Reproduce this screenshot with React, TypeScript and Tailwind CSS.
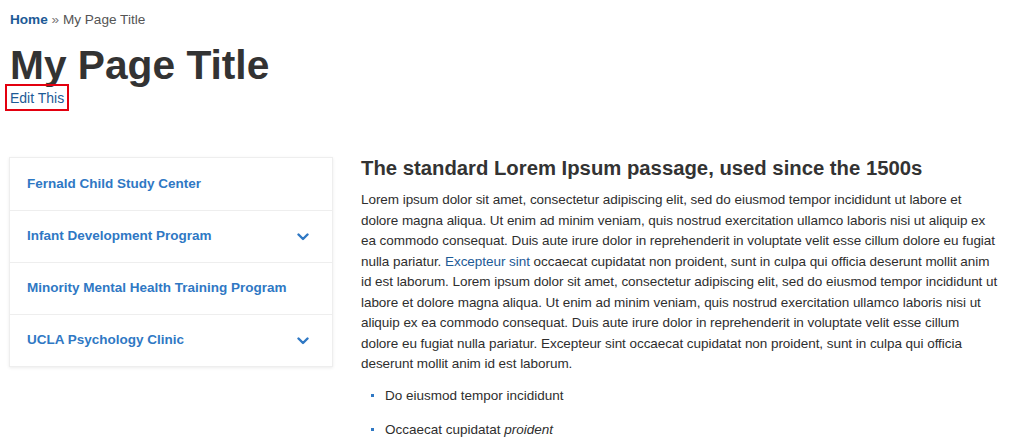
import React from "react";

const sideLinks = [
  { label: "Fernald Child Study Center", sub: false },
  { label: "Infant Development Program", sub: true },
  { label: "Minority Mental Health Training Program", sub: false },
  { label: "UCLA Psychology Clinic", sub: true },
];

const Chevron: React.FC = () => (
  <svg width="12" height="8" viewBox="0 0 12 8" fill="none" className="shrink-0">
    <path d="M1.5 1.5 6 6l4.5-4.5" stroke="#2f78c4" strokeWidth="2.4" strokeLinecap="round" strokeLinejoin="round" />
  </svg>
);

const App: React.FC = () => {
  return (
    <div className="min-h-[442px] bg-white px-[10px] pt-[11px] text-[#333] font-['Liberation_Sans',Arial,sans-serif]">
      {/* Breadcrumb */}
      <nav className="text-[13.6px] leading-[18px] text-[#555]">
        <a href="#" className="font-bold text-[#1d5a96]">Home</a>
        <span className="text-[#777]"> » </span>
        <span>My Page Title</span>
      </nav>

      {/* Title */}
      <h1 className="mt-[14px] text-[40.7px] font-bold leading-[44px] text-[#333]">My Page Title</h1>
      <div className="-ml-[5px] mt-[-3px]">
        <a href="#" className="inline-block border-2 border-[#e3000f] px-[3px] pt-[3px] pb-[2px] text-[14px] leading-[18px] text-[#1d5a96]">
          Edit This
        </a>
      </div>

      <div className="mt-[46px] flex gap-[28px] pr-[10px]">
        {/* Sidebar */}
        <aside className="-ml-px w-[324px] shrink-0 self-start border border-[#eee] bg-white shadow-[0_1px_3px_rgba(0,0,0,0.08)]">
          {sideLinks.map((l, i) => (
            <div
              key={l.label}
              className={`flex h-[52px] items-center justify-between pl-[17px] pr-[23px] ${i > 0 ? "border-t border-[#eee]" : ""}`}
            >
              <a href="#" className="text-[13.5px] font-bold text-[#2f78c4]">{l.label}</a>
              {l.sub && <Chevron />}
            </div>
          ))}
        </aside>

        {/* Main */}
        <main className="min-w-0 flex-1">
          <h2 className="mt-[-1px] text-[20.3px] font-bold leading-[24px] text-[#333]">
            The standard Lorem Ipsum passage, used since the 1500s
          </h2>
          <p className="mt-[10px] whitespace-nowrap text-[13.5px] leading-[20.5px] tracking-[-0.05px] text-[#2e2e2e]">
            Lorem ipsum dolor sit amet, consectetur adipiscing elit, sed do eiusmod tempor incididunt ut labore et<br />
            dolore magna aliqua. Ut enim ad minim veniam, quis nostrud exercitation ullamco laboris nisi ut aliquip ex<br />
            ea commodo consequat. Duis aute irure dolor in reprehenderit in voluptate velit esse cillum dolore eu fugiat<br />
            nulla pariatur. <a href="#" className="text-[#1d5a96]">Excepteur sint</a> occaecat cupidatat non proident, sunt in culpa qui officia deserunt mollit anim<br />
            id est laborum. Lorem ipsum dolor sit amet, consectetur adipiscing elit, sed do eiusmod tempor incididunt ut<br />
            labore et dolore magna aliqua. Ut enim ad minim veniam, quis nostrud exercitation ullamco laboris nisi ut<br />
            aliquip ex ea commodo consequat. Duis aute irure dolor in reprehenderit in voluptate velit esse cillum<br />
            dolore eu fugiat nulla pariatur. Excepteur sint occaecat cupidatat non proident, sunt in culpa qui officia<br />
            deserunt mollit anim id est laborum.
          </p>
          <ul className="mt-[11px] flex flex-col gap-[14px] text-[13.5px] leading-[20px] text-[#2e2e2e]">
            <li className="flex items-center">
              <span className="ml-[10px] mr-[11px] h-[3px] w-[3px] bg-[#2f78c4]" />
              Do eiusmod tempor incididunt
            </li>
            <li className="flex items-center">
              <span className="ml-[10px] mr-[11px] h-[3px] w-[3px] bg-[#2f78c4]" />
              <span>Occaecat cupidatat&nbsp;<em>proident</em></span>
            </li>
          </ul>
        </main>
      </div>
    </div>
  );
};

export default App;
